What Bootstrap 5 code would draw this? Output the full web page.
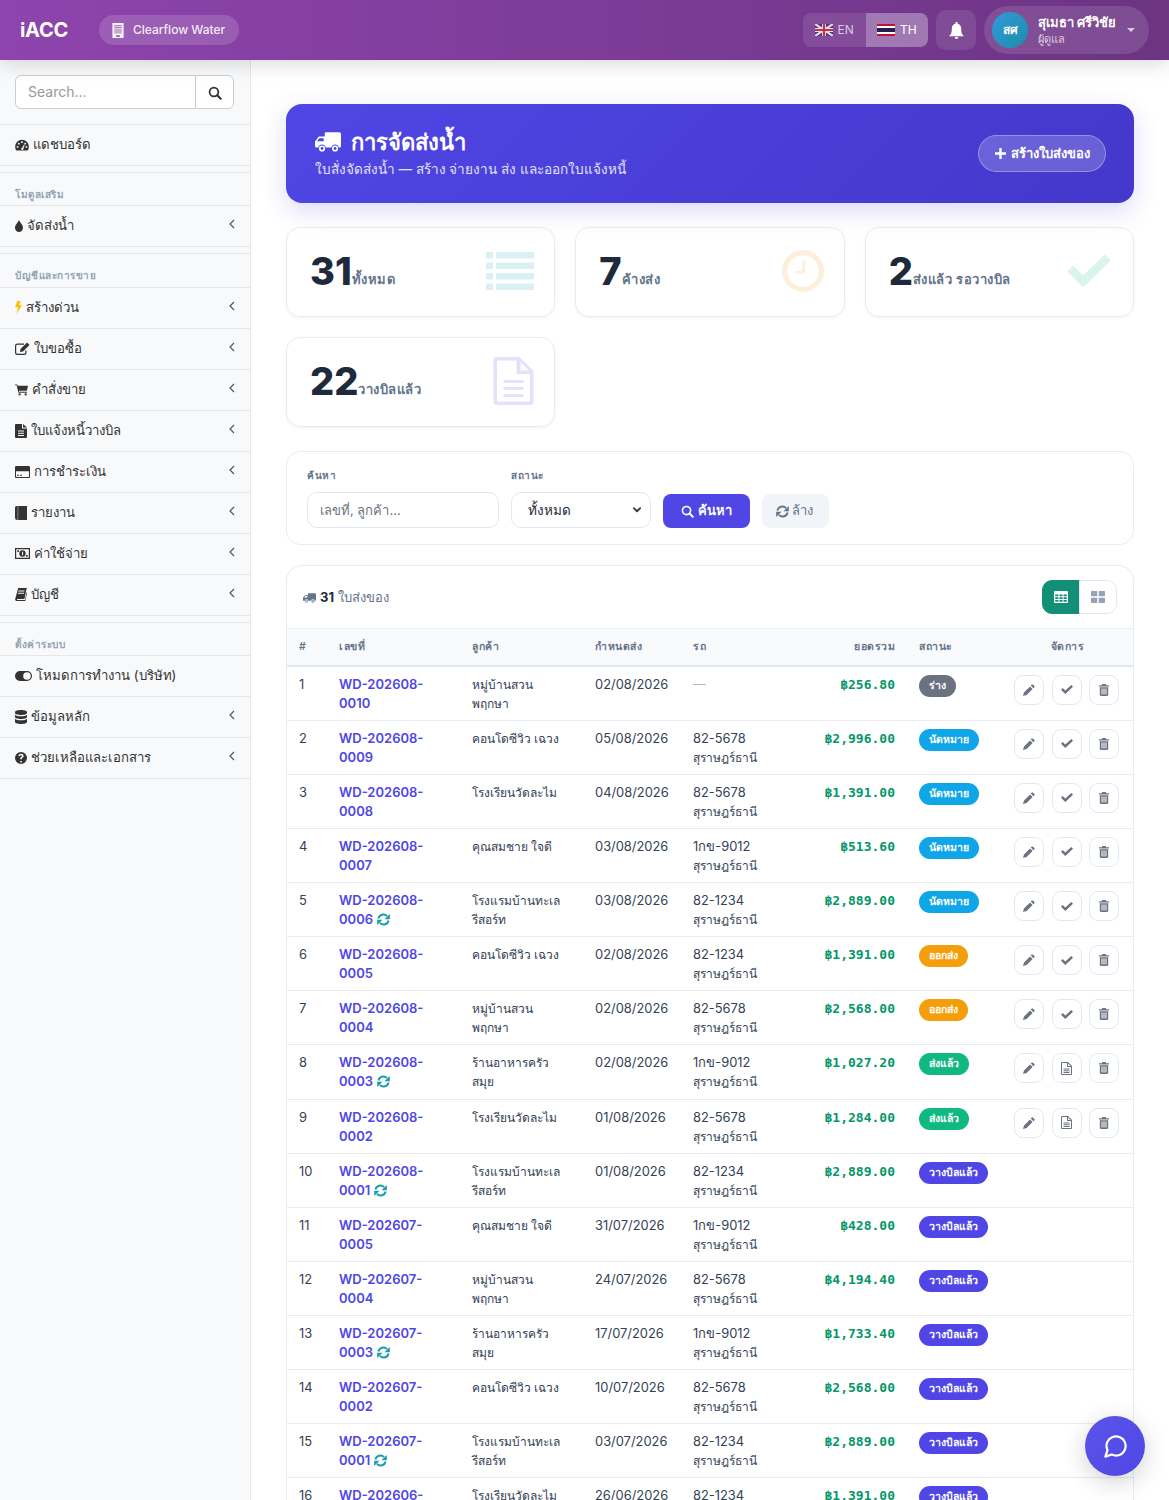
<!DOCTYPE html>
<html lang="th">
<head>
<meta charset="UTF-8">
<title>Water Delivery - iACC</title>
<link href="https://cdn.jsdelivr.net/npm/bootstrap@5.3.0/dist/css/bootstrap.min.css" rel="stylesheet">
<style>
html, body { height: 100vh; overflow: hidden; }
body { font-family: Inter, "Noto Sans", sans-serif; font-size: 14px; color: #1f2937; background: #fff; }
svg { fill: currentColor; flex: none; }

.top-bar { height: 60px; padding: 0 20px; background: linear-gradient(90deg, #8e44ad, #6c3483); box-shadow: 0 4px 20px rgba(0,0,0,.15); position: relative; z-index: 5; }
.brand-txt { font-size: 20px; font-weight: 700; color: #fff; letter-spacing: -.3px; }
.org-pill { height: 30px; margin-left: 31px; padding: 0 14px 0 13px; gap: 9px; border-radius: 15px; background: rgba(255,255,255,.15); color: rgba(255,255,255,.9); font-size: 12px; font-weight: 500; }
.lang-box { height: 34px; border-radius: 8px; overflow: hidden; background: rgba(255,255,255,.1); font-size: 12px; color: rgba(255,255,255,.7); }
.lang-opt { width: 62.5px; gap: 5px; }
.lang-opt.on { background: rgba(255,255,255,.25); color: #fff; }
.bell-box { width: 40px; height: 40px; margin-left: 8px; border-radius: 10px; background: rgba(255,255,255,.1); color: #fff; }
.user-pill { width: 165px; height: 48px; margin-left: 8px; padding: 0 14px 0 8px; border-radius: 24px; background: rgba(255,255,255,.12); color: #fff; }
.user-ava { width: 36px; height: 36px; border-radius: 50%; background: linear-gradient(135deg, #3498db, #1a8fa8); font-size: 12px; font-weight: 700; }
.user-name { font-size: 13px; font-weight: 700; line-height: 18px; margin-left: 10px; }
.user-role { font-size: 11px; line-height: 16px; margin-left: 10px; opacity: .7; }
.caret-down { width: 0; height: 0; border: 4px solid transparent; border-top-color: rgba(255,255,255,.7); border-bottom: 0; }

.page-wrap { height: calc(100vh - 60px); }
.side-col { width: 251px; flex: none; background: #f8f9fa; border-right: 1px solid #e7e7e7; padding-top: 15px; }
.side-search { padding: 0 16px 15px 15px; border-bottom: 1px solid #e7e7e7; }
.side-search .form-control, .side-search .btn { height: 34px; border-color: #ccc; font-size: 14px; }
.side-search .form-control { padding: 0 12px 2px; }
.side-search .btn { width: 39px; padding: 0 0 2px; background: #fff; color: #333; }
.side-search .form-control::placeholder { color: #999; }
.side-link { height: 41px; padding: 0 15px; border-bottom: 1px solid #e7e7e7; color: #333; text-decoration: none; font-size: 13.2px; }
.side-link svg.lead-ic { margin-right: 4px; }
.side-link .side-arrow { margin-left: auto; color: #555; position: relative; top: -2px; }
.side-head { height: 34.4px; margin-top: 6px; padding: 13px 15px 0; border-top: 1px solid #e7e7e7; border-bottom: 1px solid #e7e7e7; font-size: 10px; font-weight: 600; line-height: 16px; letter-spacing: .5px; color: #94a3b8; }

.main-col { flex: 1; min-width: 0; padding: 44px 35px 0 35px; }
.hero-box { height: 99px; padding: 0 28px 0 29px; margin-bottom: 24px; border-radius: 16px; color: #fff; background: linear-gradient(135deg, #4f46e5, #4338ca); box-shadow: 0 8px 24px rgba(79,70,229,.2); }
.hero-title { font-size: 22px; font-weight: 700; line-height: 26px; margin: 0 0 4px; gap: 10px; }
.hero-sub { font-size: 13.6px; line-height: 20px; font-weight: 500; opacity: .85; margin: 0; }
.hero-btn { height: 37px; width: 128px; padding: 0; gap: 5px; border-radius: 19px; color: #fff; font-size: 13px; font-weight: 600; background: rgba(255,255,255,.2); border: 1px solid rgba(255,255,255,.3); }
.stat-grid { display: grid; grid-template-columns: repeat(3, 1fr); gap: 20px; margin-bottom: 24px; }
.stat-box { height: 90px; padding: 0 20px 2px 24px; border: 1px solid #e8ecf1; border-radius: 14px; box-shadow: 0 1px 3px rgba(0,0,0,.06); }
.stat-num { font-size: 38px; font-weight: 800; line-height: 44px; color: #1e293b; margin-left: -1px; }
.stat-lbl { font-size: 13px; font-weight: 600; letter-spacing: .5px; color: #64748b; position: relative; top: 9px; }
.stat-ic { margin-left: auto; opacity: .15; }
.tone-list { color: #17a2b8; }
.tone-wait { color: #f39c12; }
.tone-done { color: #10b981; margin-right: 3px; }
.tone-bill { color: #4f46e5; }

.filter-box { height: 94px; margin-bottom: 20px; padding: 16px 20px; gap: 12px; border: 1px solid #e8ecf1; border-radius: 14px; }
.filter-lbl { display: block; font-size: 10px; font-weight: 600; line-height: 16px; letter-spacing: .5px; color: #64748b; margin-bottom: 9px; }
.filter-box .form-control, .filter-box .form-select { height: 36px; border-radius: 10px; border-color: #e2e8f0; font-size: 13px; color: #1f2937; padding-left: 12px; }
.filter-box .form-select { padding-left: 16px; font-size: 13.5px; background-image: url("data:image/svg+xml,%3csvg xmlns='http://www.w3.org/2000/svg' viewBox='0 0 16 16'%3e%3cpath fill='none' stroke='%23343a40' stroke-width='3' stroke-linecap='round' stroke-linejoin='round' d='m3 5 5 5 5-5'/%3e%3c/svg%3e"); background-position: right 8px center; background-size: 10px 10px; }
.filter-box .form-control::placeholder { color: #6b7280; }
.filter-ipt { width: 192px; }
.filter-sel { width: 140px; }
.btn-find { width: 87px; height: 34px; padding: 0; gap: 4px; border-radius: 8px; background: #4f46e5; border: 0; color: #fff; font-size: 13px; font-weight: 600; }
.btn-wipe { width: 67px; height: 34px; padding: 0 2px 0 0; gap: 3px; border-radius: 8px; background: #f1f5f9; border: 0; color: #64748b; font-size: 13px; }

.list-box { border: 1px solid #e8ecf1; border-radius: 16px 16px 0 0; border-bottom: 0; }
.list-top { height: 62px; padding: 0 16px; }
.list-count { color: #64748b; font-size: 13px; gap: 4px; position: relative; top: 1px; }
.list-count b { color: #1f2937; font-weight: 700; }
.view-opt { width: 38px; height: 34px; padding: 0; border: 1px solid #e2e8f0; background: #fff; color: #94a3b8; border-radius: 0 10px 10px 0; }
.view-opt.on { background: #148f77; border-color: #148f77; color: #fff; border-radius: 10px 0 0 10px; }
.job-table { table-layout: fixed; margin: 0; }
.job-table th { height: 37px; padding: 0 12px; background: #f8fafc; border-top: 1px solid #eef1f5; border-bottom: 2px solid #e2e8f0; font-size: 10.5px; font-weight: 600; letter-spacing: .5px; color: #64748b; vertical-align: middle; }
.job-table td { padding: 8px 12px 7px; line-height: 19.07px; color: #334155; border-bottom: 1px solid #e8ecf1; vertical-align: top; font-size: 12.9px; }
.job-table td.th-txt, .th-txt { font-size: 12px; }
.job-link { color: #4f46e5; font-weight: 600; font-size: 13px; text-decoration: none; }
.sync-ic { color: #1a9bac; vertical-align: -2px; }
.amt-txt { font-family: "DejaVu Sans Mono", monospace; font-weight: 700; font-size: 13px; color: #059669; }
.state-tag { display: inline-block; height: 22px; line-height: 22px; padding: 0 10px; border-radius: 11px; color: #fff; font-size: 10.5px; font-weight: 600; }
.st-draft { background: #6b7280; } .st-plan { background: #0ea5e9; } .st-out { background: #f59e0b; } .st-done { background: #10b981; } .st-bill { background: #4f46e5; }
.act-row { gap: 7.5px; }
.act-btn { width: 30px; height: 30px; padding: 0; border: 1px solid #e2e8f0; border-radius: 9px; background: #fff; color: #6b7280; }
.chat-fab { position: fixed; right: 24px; bottom: 24px; width: 60px; height: 60px; border-radius: 50%; background: linear-gradient(135deg, #5b54ea, #4f46e5); color: #fff; box-shadow: 0 6px 24px rgba(0,0,0,.18); z-index: 9; }
.chat-fab svg { fill: none; }
.col-a { width: 40px; } .col-b { width: 133px; } .col-c { width: 123px; } .col-d { width: 98px; } .col-e { width: 115px; } .col-f { width: 111px; } .col-g { width: 95px; } .col-h { width: 131px; }
</style>
</head>
<body>

<!-- icons -->
<svg width="0" height="0" class="position-absolute">
  <symbol id="i-truck" viewBox="0 0 24 18"><path fill-rule="evenodd" d="M10 0h12.5A1.5 1.5 0 0 1 24 1.5V13a1 1 0 0 1-1 1h-1.1a3.5 3.5 0 0 0-6.8 0H9.9a3.5 3.5 0 0 0-6.8 0H1a1 1 0 0 1-1-1V8.5L3.5 4H9V1a1 1 0 0 1 1-1zM4.1 5.5 1.8 8.3H8V5.5z"/><circle cx="6.5" cy="15" r="2.1" fill="none" stroke="currentColor" stroke-width="1.5"/><circle cx="18.5" cy="15" r="2.1" fill="none" stroke="currentColor" stroke-width="1.5"/></symbol>
  <symbol id="i-search" viewBox="0 0 16 16"><circle cx="6.8" cy="6.8" r="5" fill="none" stroke="currentColor" stroke-width="2"/><path d="m10.5 10.5 4 4" stroke="currentColor" stroke-width="2.4" stroke-linecap="round"/></symbol>
  <symbol id="i-gauge" viewBox="0 0 16 14"><path fill-rule="evenodd" d="M8 1a8 8 0 0 0-8 8c0 1.6.4 2.9 1.2 4 .2.3.5.5.9.5h11.8c.4 0 .7-.2.9-.5.8-1.1 1.2-2.4 1.2-4a8 8 0 0 0-8-8zM1.700 9.200a1.100 1.100 0 1 0 2.200 0 1.100 1.100 0 1 0-2.200 0zM3.200 5.400a1.100 1.100 0 1 0 2.200 0 1.100 1.100 0 1 0-2.200 0zM6.900 3.700a1.100 1.100 0 1 0 2.200 0 1.100 1.100 0 1 0-2.200 0zM10.600 5.400a1.100 1.100 0 1 0 2.200 0 1.100 1.100 0 1 0-2.200 0zM12.100 9.200a1.100 1.100 0 1 0 2.200 0 1.100 1.100 0 1 0-2.200 0zM7 11.500a1.400 1.400 0 0 0 2.600.6l1.400-5.200-.8-.2-1.900 3.500A1.400 1.400 0 0 0 7 11.500z"/></symbol>
  <symbol id="i-drop" viewBox="0 0 8 12"><path d="M4 0c.5 2 4 4.500 4 7.800C8 10.200 6.200 12 4 12S0 10.200 0 7.800C0 4.500 3.500 2 4 0z"/></symbol>
  <symbol id="i-left" viewBox="0 0 6 10"><path d="M5 1 1 5l4 4" fill="none" stroke="currentColor" stroke-width="1.2"/></symbol>
  <symbol id="i-bolt" viewBox="0 0 7 13"><path d="M2.200 0h3.600L4 4.300h3L1.500 13l1.500-6.800H0z"/></symbol>
  <symbol id="i-edit" viewBox="0 0 15 13"><path d="M2.500 1.500H9v1.200H2.500A1.300 1.300 0 0 0 1.200 4v6.500a1.300 1.300 0 0 0 1.300 1.300H9a1.300 1.300 0 0 0 1.300-1.300V8.500h1.200v2A2.500 2.500 0 0 1 9 13H2.500A2.500 2.500 0 0 1 0 10.500V4a2.500 2.500 0 0 1 2.500-2.500z"/><path d="M12 .5l2.500 2.500-6.500 6.500L5 10l.5-3z"/></symbol>
  <symbol id="i-cart" viewBox="0 0 14 12"><path d="M0 0h2.500l.4 1.500H14l-1.200 5.300H4.200l.3 1.200h8.300v1H3.700L1.800 1H0z"/><circle cx="5" cy="10.800" r="1.200"/><circle cx="11.500" cy="10.800" r="1.200"/></symbol>
  <symbol id="i-file" viewBox="0 0 12 14"><path fill-rule="evenodd" d="M0 1a1 1 0 0 1 1-1h6v4.500h5V13a1 1 0 0 1-1 1H1a1 1 0 0 1-1-1zM8 0l4 3.500H8zM3 6.500v1h6v-1zM3 8.800v1h6v-1zM3 11v1h6v-1z"/></symbol>
  <symbol id="i-card" viewBox="0 0 15 12"><path fill-rule="evenodd" d="M1.300 0h12.400C14.400 0 15 .6 15 1.300v9.400c0 .7-.6 1.300-1.300 1.300H1.300C.6 12 0 11.400 0 10.700V1.300C0 .6.600 0 1.300 0zM1 5.300v5.200c0 .3.200.5.500.5h12c.3 0 .5-.2.500-.5V5.300zM2 8.800v1h2v-1zM5 8.800v1h2v-1z"/></symbol>
  <symbol id="i-tome" viewBox="0 0 12 14"><path d="M1.500 0H12v14H2.300A2.300 2.300 0 0 1 0 11.700V1.500A1.500 1.500 0 0 1 1.500 0z"/><path d="M2.500 0h.8v14h-.8z" fill="#f8f9fa" opacity=".5"/></symbol>
  <symbol id="i-cash" viewBox="0 0 15 11"><path fill-rule="evenodd" d="M0 0h15v11H0zM1.200 1.200v8.600h12.600V1.200zM7.500 2.300a3.200 3.200 0 1 1 0 6.400 3.200 3.200 0 0 1 0-6.400z"/><path d="M2.200 2.200h1.800v1.800H2.200zM11 7h1.800v1.800H11z" opacity=".9"/><path d="M7 3.800h1.100v3.500H7z" fill="#f8f9fa"/></symbol>
  <symbol id="i-ledger" viewBox="0 0 12 13"><path fill-rule="evenodd" d="M3.200 0H12l-.6 1.200-2 9.800H2.700c-.5 0-.8.300-.8.700 0 .3.200.4.500.4H10l1.500-8.200.5 1-1.700 8.100H1.800C.7 13 0 12.200.2 11z M3.500 2.500l-.2 1h6l.2-1zM3.100 4.700l-.2 1h6l.2-1z"/></symbol>
  <symbol id="i-toggle" viewBox="0 0 17 10"><path fill-rule="evenodd" d="M5 0h7a5 5 0 0 1 0 10H5A5 5 0 0 1 5 0zm7 1.200a3.800 3.800 0 1 0 0 7.600 3.800 3.800 0 0 0 0-7.600z"/></symbol>
  <symbol id="i-db" viewBox="0 0 12 14"><path d="M6 0c3.300 0 6 .9 6 2v1c0 1.100-2.700 2-6 2S0 4.100 0 3V2C0 .9 2.700 0 6 0zM0 4.700C1 5.700 3.400 6.200 6 6.200s5-.5 6-1.500V7c0 1.100-2.700 2-6 2S0 8.100 0 7zM0 8.700c1 1 3.400 1.500 6 1.500s5-.5 6-1.500V12c0 1.100-2.700 2-6 2s-6-.9-6-2z"/></symbol>
  <symbol id="i-help" viewBox="0 0 12 12"><path fill-rule="evenodd" d="M6 0a6 6 0 1 1 0 12A6 6 0 0 1 6 0zM5.200 9v1.400h1.600V9zM6 1.800C4.600 1.800 3.600 2.500 3.300 3.800l1.400.4c.2-.7.600-1 1.200-1 .7 0 1.100.3 1.100.8 0 .4-.3.700-.8 1-.8.500-1 1-1 1.800v.5h1.500v-.4c0-.4.100-.6.600-.9.800-.5 1.300-1 1.300-2C8.600 2.600 7.500 1.800 6 1.800z"/></symbol>
  <symbol id="i-plus" viewBox="0 0 12 12"><path d="M4.700 0h2.600v4.700H12v2.600H7.300V12H4.700V7.300H0V4.700h4.700z"/></symbol>
  <symbol id="i-bell" viewBox="0 0 16 18"><path d="M8 0c.7 0 1.200.5 1.200 1.100v.7C11.600 2.300 13 4.300 13 7c0 4.700 1 6 3 8H0c2-2 3-3.300 3-8 0-2.700 1.400-4.700 3.800-5.200v-.7C6.800.5 7.300 0 8 0zM6 16h4a2 2 0 0 1-4 0z"/></symbol>
  <symbol id="i-list" viewBox="0 0 48 38"><path d="M0 0h7v6.500H0zM10 0h38v6.500H10zM0 10.500h7V17H0zM10 10.500h38V17H10zM0 21h7v6.500H0zM10 21h38v6.500H10zM0 31.500h7V38H0zM10 31.500h38V38H10z"/></symbol>
  <symbol id="i-clock" viewBox="0 0 40 40"><circle cx="20" cy="20" r="17.500" fill="none" stroke="currentColor" stroke-width="5"/><path d="M22 10v12.500H13V20h6.500V10z"/></symbol>
  <symbol id="i-check" viewBox="0 0 40 30"><path d="M14.500 30 0 15.500 5 10.500l9.500 9.500L35 0l5 5z" stroke="currentColor" stroke-linejoin="round" stroke-width="1"/></symbol>
  <symbol id="i-doc" viewBox="0 0 40 48"><path fill-rule="evenodd" d="M3 0h23l14 14v31a3 3 0 0 1-3 3H3a3 3 0 0 1-3-3V3a3 3 0 0 1 3-3zm.500 3.500v41h33V17H23V3.500zM27 5v8.500h8.500zM10 23h20v3H10zM10 30h20v3H10zM10 37h20v3H10z"/></symbol>
  <symbol id="i-sync" viewBox="0 0 14 14"><path d="M1.500 6A5.500 5.500 0 0 1 10.800 3.300M12.500 8A5.500 5.500 0 0 1 3.200 10.700" fill="none" stroke="currentColor" stroke-width="2.100"/><path d="M13.800 1v5.700H8.100zM.2 13V7.300h5.700z"/></symbol>
  <symbol id="i-table" viewBox="0 0 14 12"><path fill-rule="evenodd" d="M1 0h12a1 1 0 0 1 1 1v10a1 1 0 0 1-1 1H1a1 1 0 0 1-1-1V1a1 1 0 0 1 1-1zm.2 3.600v1.700h3.200V3.600zm4.200 0v1.700h3.200V3.600zm4.200 0v1.700h3.200V3.600zM1.200 6.300V8h3.200V6.300zm4.200 0V8h3.200V6.300zm4.200 0V8h3.200V6.300zM1.200 9v1.800h3.200V9zm4.200 0v1.800h3.200V9zm4.200 0v1.800h3.200V9z"/></symbol>
  <symbol id="i-grid" viewBox="0 0 14 12"><rect width="6.300" height="5.300" rx=".8"/><rect x="7.700" width="6.300" height="5.300" rx=".8"/><rect y="6.700" width="6.300" height="5.300" rx=".8"/><rect x="7.700" y="6.700" width="6.300" height="5.300" rx=".8"/></symbol>
  <symbol id="i-pen" viewBox="0 0 12 12"><path d="M8.800.6c.3-.3.800-.3 1.100 0l1.500 1.500c.3.300.3.800 0 1.100l-1 1L7.800 1.600zM7 2.400l2.600 2.600-6 6L0 12l1-3.600z"/></symbol>
  <symbol id="i-ok" viewBox="0 0 12 9"><path d="M4.300 9 0 4.700l1.700-1.700 2.600 2.600L10.300 0 12 1.700z"/></symbol>
  <symbol id="i-trash" viewBox="0 0 10 12"><path fill-rule="evenodd" d="M3.300 0h3.400l.5 1.200H10v1.300H0V1.200h2.800zM.8 3.300h8.400v7.500c0 .7-.5 1.200-1.200 1.200H2c-.7 0-1.200-.5-1.200-1.200zM2.500 4.500v6h1v-6zM4.500 4.500v6h1v-6zM6.500 4.500v6h1v-6z"/></symbol>
  <symbol id="i-note" viewBox="0 0 11 13"><path fill-rule="evenodd" d="M1 0h6l4 4v8a1 1 0 0 1-1 1H1a1 1 0 0 1-1-1V1a1 1 0 0 1 1-1zm0 1v11h9V5H6V1zm6 .4V4h2.600zM2.500 6.500h6v1h-6zM2.500 8.300h6v1h-6zM2.500 10h6v1h-6z"/></symbol>
  <symbol id="i-org" viewBox="0 0 12 16"><path fill-rule="evenodd" d="M0 0h12v16H0zM2 2v1h8V2zM2 4v1h8V4zM2 6v1h8V6zM2 8v1h8V8zM2 10v1h8v-1zM4 13v2h4v-2z"/></symbol>
</svg>

<nav class="navbar top-bar d-flex align-items-center flex-nowrap justify-content-start">
  <span class="brand-txt">iACC</span>
  <span class="org-pill d-flex align-items-center">
    <svg width="12" height="15"><use href="#i-org"/></svg>Clearflow Water
  </span>
  <div class="ms-auto d-flex align-items-center">
    <div class="lang-box d-flex">
      <span class="lang-opt d-flex align-items-center justify-content-center">
        <svg width="18" height="12" viewBox="0 0 18 12"><rect width="18" height="12" fill="#4a3a78"/><path d="M0 0l18 12M18 0 0 12" stroke="#e8dce8" stroke-width="2.200"/><path d="M9 0v12M0 6h18" stroke="#e8dce8" stroke-width="4"/><path d="M9 0v12M0 6h18" stroke="#c0304f" stroke-width="2.200"/></svg>EN
      </span>
      <span class="lang-opt on d-flex align-items-center justify-content-center">
        <svg width="18" height="12" viewBox="0 0 18 12"><rect width="18" height="12" fill="#c8102e"/><rect y="2" width="18" height="8" fill="#fff"/><rect y="4" width="18" height="4" fill="#241d4f"/></svg>TH
      </span>
    </div>
    <div class="bell-box d-flex align-items-center justify-content-center"><svg width="15" height="17"><use href="#i-bell"/></svg></div>
    <div class="user-pill d-flex align-items-center">
      <span class="user-ava d-flex align-items-center justify-content-center">สศ</span>
      <div class="flex-grow-1">
        <div class="user-name">สุเมธา ศรีวิชัย</div>
        <div class="user-role">ผู้ดูแล</div>
      </div>
      <span class="caret-down"></span>
    </div>
  </div>
</nav>

<div class="page-wrap d-flex">
  <aside class="side-col">
    <div class="side-search">
      <div class="input-group">
        <input class="form-control" type="text" placeholder="Search...">
        <button class="btn" type="button"><svg width="14" height="14"><use href="#i-search"/></svg></button>
      </div>
    </div>
    <a class="side-link d-flex align-items-center" href="#"><svg class="lead-ic" width="14" height="12"><use href="#i-gauge"/></svg>แดชบอร์ด</a>
    <div class="side-head">โมดูลเสริม</div>
    <a class="side-link d-flex align-items-center" href="#"><svg class="lead-ic" width="8" height="12"><use href="#i-drop"/></svg>จัดส่งน้ำ<svg class="side-arrow" width="6" height="10"><use href="#i-left"/></svg></a>
    <div class="side-head">บัญชีและการขาย</div>
    <a class="side-link d-flex align-items-center" href="#"><svg class="lead-ic text-warning" width="7" height="13"><use href="#i-bolt"/></svg>สร้างด่วน<svg class="side-arrow" width="6" height="10"><use href="#i-left"/></svg></a>
    <a class="side-link d-flex align-items-center" href="#"><svg class="lead-ic" width="15" height="13"><use href="#i-edit"/></svg>ใบขอซื้อ<svg class="side-arrow" width="6" height="10"><use href="#i-left"/></svg></a>
    <a class="side-link d-flex align-items-center" href="#"><svg class="lead-ic" width="13" height="12"><use href="#i-cart"/></svg>คำสั่งขาย<svg class="side-arrow" width="6" height="10"><use href="#i-left"/></svg></a>
    <a class="side-link d-flex align-items-center" href="#"><svg class="lead-ic" width="12" height="14"><use href="#i-file"/></svg>ใบแจ้งหนี้วางบิล<svg class="side-arrow" width="6" height="10"><use href="#i-left"/></svg></a>
    <a class="side-link d-flex align-items-center" href="#"><svg class="lead-ic" width="15" height="12"><use href="#i-card"/></svg>การชำระเงิน<svg class="side-arrow" width="6" height="10"><use href="#i-left"/></svg></a>
    <a class="side-link d-flex align-items-center" href="#"><svg class="lead-ic" width="12" height="14"><use href="#i-tome"/></svg>รายงาน<svg class="side-arrow" width="6" height="10"><use href="#i-left"/></svg></a>
    <a class="side-link d-flex align-items-center" href="#"><svg class="lead-ic" width="15" height="11"><use href="#i-cash"/></svg>ค่าใช้จ่าย<svg class="side-arrow" width="6" height="10"><use href="#i-left"/></svg></a>
    <a class="side-link d-flex align-items-center" href="#"><svg class="lead-ic" width="12" height="13"><use href="#i-ledger"/></svg>บัญชี<svg class="side-arrow" width="6" height="10"><use href="#i-left"/></svg></a>
    <div class="side-head">ตั้งค่าระบบ</div>
    <a class="side-link d-flex align-items-center" href="#"><svg class="lead-ic" width="17" height="10"><use href="#i-toggle"/></svg>โหมดการทำงาน (บริษัท)</a>
    <a class="side-link d-flex align-items-center" href="#"><svg class="lead-ic" width="12" height="14"><use href="#i-db"/></svg>ข้อมูลหลัก<svg class="side-arrow" width="6" height="10"><use href="#i-left"/></svg></a>
    <a class="side-link d-flex align-items-center" href="#"><svg class="lead-ic" width="12" height="12"><use href="#i-help"/></svg>ช่วยเหลือและเอกสาร<svg class="side-arrow" width="6" height="10"><use href="#i-left"/></svg></a>
  </aside>

  <main class="main-col">
    <div class="hero-box d-flex align-items-center justify-content-between">
      <div>
        <h1 class="hero-title d-flex align-items-center"><svg width="26" height="20"><use href="#i-truck"/></svg>การจัดส่งน้ำ</h1>
        <p class="hero-sub">ใบสั่งจัดส่งน้ำ — สร้าง จ่ายงาน ส่ง และออกใบแจ้งหนี้</p>
      </div>
      <button class="btn hero-btn d-flex align-items-center justify-content-center" type="button"><svg width="11" height="11"><use href="#i-plus"/></svg>สร้างใบส่งของ</button>
    </div>

    <div class="stat-grid">
      <div class="stat-box d-flex align-items-center"><span class="stat-num">31</span><span class="stat-lbl">ทั้งหมด</span><svg class="stat-ic tone-list" width="48" height="38"><use href="#i-list"/></svg></div>
      <div class="stat-box d-flex align-items-center"><span class="stat-num">7</span><span class="stat-lbl">ค้างส่ง</span><svg class="stat-ic tone-wait" width="42" height="42"><use href="#i-clock"/></svg></div>
      <div class="stat-box d-flex align-items-center"><span class="stat-num">2</span><span class="stat-lbl">ส่งแล้ว รอวางบิล</span><svg class="stat-ic tone-done" width="42" height="32"><use href="#i-check"/></svg></div>
      <div class="stat-box d-flex align-items-center"><span class="stat-num">22</span><span class="stat-lbl">วางบิลแล้ว</span><svg class="stat-ic tone-bill" width="41" height="48"><use href="#i-doc"/></svg></div>
    </div>

    <form class="filter-box d-flex align-items-end">
      <div>
        <label class="filter-lbl">ค้นหา</label>
        <input class="form-control filter-ipt" type="text" placeholder="เลขที่, ลูกค้า...">
      </div>
      <div>
        <label class="filter-lbl">สถานะ</label>
        <select class="form-select filter-sel"><option>ทั้งหมด</option></select>
      </div>
      <button class="btn btn-find d-flex align-items-center justify-content-center" type="button"><svg width="13" height="13"><use href="#i-search"/></svg>ค้นหา</button>
      <button class="btn btn-wipe d-flex align-items-center justify-content-center" type="button"><svg width="13" height="13"><use href="#i-sync"/></svg>ล้าง</button>
    </form>

    <div class="list-box">
      <div class="list-top d-flex align-items-center justify-content-between">
        <span class="list-count d-flex align-items-center"><svg width="13" height="10"><use href="#i-truck"/></svg><b>31</b> ใบส่งของ</span>
        <div class="btn-group">
          <button class="btn view-opt on d-flex align-items-center justify-content-center" type="button"><svg width="14" height="12"><use href="#i-table"/></svg></button>
          <button class="btn view-opt d-flex align-items-center justify-content-center" type="button"><svg width="14" height="12"><use href="#i-grid"/></svg></button>
        </div>
      </div>
      <table class="table job-table">
        <colgroup><col class="col-a"><col class="col-b"><col class="col-c"><col class="col-d"><col class="col-e"><col class="col-f"><col class="col-g"><col class="col-h"></colgroup>
        <thead>
          <tr><th>#</th><th>เลขที่</th><th>ลูกค้า</th><th>กำหนดส่ง</th><th>รถ</th><th class="text-end">ยอดรวม</th><th>สถานะ</th><th class="text-center">จัดการ</th></tr>
        </thead>
        <tbody id="job-rows"></tbody>
      </table>
    </div>
  </main>
</div>

<div class="chat-fab d-flex align-items-center justify-content-center">
  <svg width="27" height="27" viewBox="0 0 24 24" stroke="currentColor" stroke-width="2" stroke-linejoin="round"><path d="M21 11.500a8.380 8.380 0 0 1-.9 3.800 8.500 8.500 0 0 1-7.600 4.700 8.380 8.380 0 0 1-3.800-.9L3 21l1.900-5.700a8.380 8.380 0 0 1-.9-3.800 8.500 8.500 0 0 1 4.700-7.600 8.380 8.380 0 0 1 3.800-.9h.5a8.480 8.480 0 0 1 8 8v.5z"/></svg>
</div>

<script>
  const STATES = {
    draft: ["st-draft", "ร่าง"],
    plan: ["st-plan", "นัดหมาย"],
    out: ["st-out", "ออกส่ง"],
    done: ["st-done", "ส่งแล้ว"],
    bill: ["st-bill", "วางบิลแล้ว"]
  };

  const jobs = [
    ["WD-202608-<br>0010", 0, "หมู่บ้านสวน<br>พฤกษา", "02/08/2026", "", "256.80", "draft"],
    ["WD-202608-<br>0009", 0, "คอนโดซีวิว เฉวง", "05/08/2026", "82-5678", "2,996.00", "plan"],
    ["WD-202608-<br>0008", 0, "โรงเรียนวัดละไม", "04/08/2026", "82-5678", "1,391.00", "plan"],
    ["WD-202608-<br>0007", 0, "คุณสมชาย ใจดี", "03/08/2026", "1กข-9012", "513.60", "plan"],
    ["WD-202608-<br>0006", 1, "โรงแรมบ้านทะเล<br>รีสอร์ท", "03/08/2026", "82-1234", "2,889.00", "plan"],
    ["WD-202608-<br>0005", 0, "คอนโดซีวิว เฉวง", "02/08/2026", "82-1234", "1,391.00", "out"],
    ["WD-202608-<br>0004", 0, "หมู่บ้านสวน<br>พฤกษา", "02/08/2026", "82-5678", "2,568.00", "out"],
    ["WD-202608-<br>0003", 1, "ร้านอาหารครัว<br>สมุย", "02/08/2026", "1กข-9012", "1,027.20", "done"],
    ["WD-202608-<br>0002", 0, "โรงเรียนวัดละไม", "01/08/2026", "82-5678", "1,284.00", "done"],
    ["WD-202608-<br>0001", 1, "โรงแรมบ้านทะเล<br>รีสอร์ท", "01/08/2026", "82-1234", "2,889.00", "bill"],
    ["WD-202607-<br>0005", 0, "คุณสมชาย ใจดี", "31/07/2026", "1กข-9012", "428.00", "bill"],
    ["WD-202607-<br>0004", 0, "หมู่บ้านสวน<br>พฤกษา", "24/07/2026", "82-5678", "4,194.40", "bill"],
    ["WD-202607-<br>0003", 1, "ร้านอาหารครัว<br>สมุย", "17/07/2026", "1กข-9012", "1,733.40", "bill"],
    ["WD-202607-<br>0002", 0, "คอนโดซีวิว เฉวง", "10/07/2026", "82-5678", "2,568.00", "bill"],
    ["WD-202607-<br>0001", 1, "โรงแรมบ้านทะเล<br>รีสอร์ท", "03/07/2026", "82-1234", "2,889.00", "bill"],
    ["WD-202606-<br>0005", 0, "โรงเรียนวัดละไม", "26/06/2026", "82-1234", "1,391.00", "bill"]
  ];

  function actionBtns(state) {
    if (state === "bill") return "";
    let middle = state === "done"
      ? '<svg width="11" height="13"><use href="#i-note"/></svg>'
      : '<svg width="12" height="9"><use href="#i-ok"/></svg>';
    return `<div class="act-row d-flex">
      <button class="btn act-btn d-flex align-items-center justify-content-center"><svg width="12" height="12"><use href="#i-pen"/></svg></button>
      <button class="btn act-btn d-flex align-items-center justify-content-center">${middle}</button>
      <button class="btn act-btn d-flex align-items-center justify-content-center"><svg width="10" height="12"><use href="#i-trash"/></svg></button>
    </div>`;
  }

  let html = "";
  jobs.forEach((j, i) => {
    let st = STATES[j[6]];
    let sync = j[1] ? ' <svg class="sync-ic" width="13" height="13"><use href="#i-sync"/></svg>' : "";
    let car = j[4] ? `${j[4]}<br><span class="th-txt">สุราษฎร์ธานี</span>` : '<span class="text-secondary opacity-50">—</span>';
    html += `<tr>
      <td>${i + 1}</td>
      <td><a class="job-link" href="#">${j[0]}</a>${sync}</td>
      <td class="th-txt">${j[2]}</td>
      <td>${j[3]}</td>
      <td>${car}</td>
      <td class="text-end"><span class="amt-txt">฿${j[5]}</span></td>
      <td><span class="state-tag ${st[0]}">${st[1]}</span></td>
      <td>${actionBtns(j[6])}</td>
    </tr>`;
  });
  document.getElementById("job-rows").innerHTML = html;
</script>
<script src="https://cdn.jsdelivr.net/npm/bootstrap@5.3.0/dist/js/bootstrap.bundle.min.js"></script>
</body>
</html>
